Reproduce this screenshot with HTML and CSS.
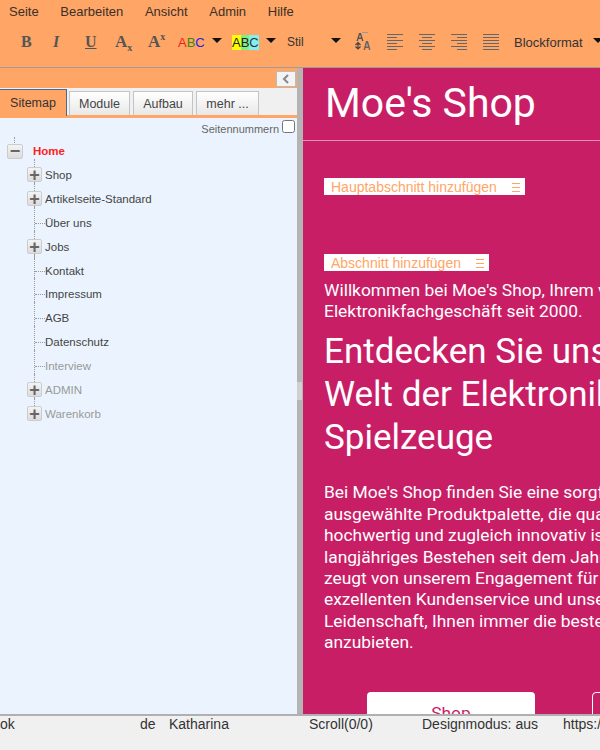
FILE: index.html

```html
<!DOCTYPE html>
<html lang="de">
<head>
    <meta charset="UTF-8" />
    <title>Moe's Shop</title>
    <link rel="stylesheet" href="styles.css">
</head>
<body>
    <header class="toolbar">
        <nav class="menu">
            <span>Seite</span>
            <span>Bearbeiten</span>
            <span>Ansicht</span>
            <span>Admin</span>
            <span>Hilfe</span>
        </nav>
        <div class="tools">
            <span class="tool bold">B</span>
            <span class="tool italic">I</span>
            <span class="tool under"><u>U</u></span>
            <span class="tool big w33">A<sub>x</sub></span>
            <span class="tool big w30">A<sup>x</sup></span>
            <span class="abc"><b class="red">A</b><b class="green">B</b><b class="blue">C</b></span>
            <i class="caret caret-a"></i>
            <span class="abc"><b class="yellow">A</b><b class="lime">B</b><b class="cyan">C</b></span>
            <i class="caret caret-b"></i>
            <span class="select-label stil">Stil</span>
            <i class="caret caret-c"></i>
            <svg class="tool-icon size-icon" width="18" height="20" viewBox="0 0 18 20">
                <path d="M5 1h2l2.500 8h-1.500l-.5-2h-3l-.5 2h-1.500zM5 5.500h2l-1-3z" fill="#555"/>
                <path d="M8 0.500h6" stroke="#999"/>
                <path d="M4 11v6M1.500 14.500l2.500 2.500 2.500-2.500M1.500 13l2.500-2.500 2.500 2.500" stroke="#444" fill="none" stroke-width="1.200"/>
                <path d="M12 9h2l2.500 9h-1.500l-.5-2h-3l-.5 2h-1.500zM12 14.500h2l-1-3.500z" fill="#666"/>
            </svg>
            <svg class="tool-icon align" width="16" height="18" viewBox="0 0 16 18">
                <path d="M0 1.500h16M0 4.500h10M0 7.500h16M0 10.500h10M0 13.500h16M0 16.500h10" stroke="#666"/>
            </svg>
            <svg class="tool-icon align" width="16" height="18" viewBox="0 0 16 18">
                <path d="M0 1.500h16M3 4.500h10M0 7.500h16M3 10.500h10M0 13.500h16M3 16.500h10" stroke="#666"/>
            </svg>
            <svg class="tool-icon align" width="16" height="18" viewBox="0 0 16 18">
                <path d="M0 1.500h16M6 4.500h10M0 7.500h16M6 10.500h10M0 13.500h16M6 16.500h10" stroke="#666"/>
            </svg>
            <svg class="tool-icon align last" width="16" height="18" viewBox="0 0 16 18">
                <path d="M0 1.500h16M0 4.500h16M0 7.500h16M0 10.500h16M0 13.500h16M0 16.500h16" stroke="#666"/>
            </svg>
            <span class="select-label block">Blockformat</span>
            <i class="caret"></i>
        </div>
    </header>

    <main class="main">
        <aside class="side">
            <div class="collapse-bar">
                <button class="collapse">
                    <svg width="10" height="10" viewBox="0 0 10 10"><path d="M7 1L3 5l4 4" fill="none" stroke="#888" stroke-width="2"/></svg>
                </button>
            </div>
            <div class="tabs">
                <span class="tab active">Sitemap</span>
                <span class="tab">Module</span>
                <span class="tab">Aufbau</span>
                <span class="tab">mehr ...</span>
            </div>
            <div class="tree-panel">
                <label class="numbers">Seitennummern <input type="checkbox"></label>
                <div class="tree">
                    <div class="root"><span class="toggle large">&minus;</span><span class="home">Home</span></div>
                    <ul class="nodes">
                        <li><span class="toggle">+</span>Shop</li>
                        <li><span class="toggle">+</span>Artikelseite-Standard</li>
                        <li class="leaf">Über uns</li>
                        <li><span class="toggle">+</span>Jobs</li>
                        <li class="leaf">Kontakt</li>
                        <li class="leaf">Impressum</li>
                        <li class="leaf">AGB</li>
                        <li class="leaf">Datenschutz</li>
                        <li class="leaf off">Interview</li>
                        <li class="off"><span class="toggle">+</span>ADMIN</li>
                        <li class="off"><span class="toggle">+</span>Warenkorb</li>
                    </ul>
                </div>
            </div>
        </aside>

        <div class="splitter"><span class="grip"></span></div>

        <section class="content">
            <div class="site-head">Moe's Shop</div>
            <div class="add main-add">Hauptabschnitt hinzufügen <svg class="bars" width="8" height="10" viewBox="0 0 8 10"><path d="M0 1.500h8M0 5.500h8M0 9.500h8" stroke="#ffa566"/></svg></div>
            <div class="add sub-add">Abschnitt hinzufügen <svg class="bars" width="8" height="10" viewBox="0 0 8 10"><path d="M0 1.500h8M0 5.500h8M0 9.500h8" stroke="#ffa566"/></svg></div>
            <p class="intro">Willkommen bei Moe's Shop, Ihrem vertrauenswürdigen<br>Elektronikfachgeschäft seit 2000.</p>
            <h1>Entdecken Sie unsere<br>Welt der Elektronik und<br>Spielzeuge</h1>
            <p class="text">Bei Moe's Shop finden Sie eine sorgfältig<br>ausgewählte Produktpalette, die qualitativ<br>hochwertig und zugleich innovativ ist. Unser<br>langjähriges Bestehen seit dem Jahr 2000<br>zeugt von unserem Engagement für<br>exzellenten Kundenservice und unsere<br>Leidenschaft, Ihnen immer die besten Produkte<br>anzubieten.</p>
            <div class="cta">
                <a class="btn">Shop</a>
                <a class="btn outline">Kontakt</a>
            </div>
        </section>
    </main>

    <footer class="status">
        <span class="st-ok">ok</span>
        <span class="st-lang">de</span>
        <span class="st-user">Katharina</span>
        <span class="st-scroll">Scroll(0/0)</span>
        <span class="st-mode">Designmodus: aus</span>
        <span class="st-url">https://moes-shop.de</span>
    </footer>
</body>
</html>
```

FILE: styles.css

```css
* {
    box-sizing: border-box;
}

html, body {
    height: 100%;
}

body {
    margin: 0;
    display: flex;
    flex-direction: column;
    overflow: hidden;
    font-family: "Liberation Sans", Arial, sans-serif;
    background: #f0f0f0;
    color: #222;
}

/* top bar */
.toolbar {
    height: 68px;
    flex: none;
    background: #ffa566;
    border-bottom: 1px solid #a89a8e;
    overflow: hidden;
}

.menu {
    display: flex;
    gap: 21.700px;
    padding: 4px 0 0 9px;
    height: 25px;
    font-size: 13px;
    line-height: 15px;
    color: #3a3028;
}

.tools {
    display: flex;
    align-items: center;
    height: 34px;
    padding-left: 21px;
    white-space: nowrap;
}

.tool {
    flex: none;
    color: #555;
    font-family: "Liberation Serif", serif;
    font-weight: bold;
    font-size: 16px;
    line-height: 20px;
}

.bold {
    width: 32px;
}

.italic {
    width: 32px;
    font-style: italic;
}

.under {
    width: 30px;
}

.big {
    font-size: 17px;
}

.w33 {
    width: 33px;
}

.w30 {
    width: 30px;
}

.big sub, .big sup {
    font-size: 10px;
    line-height: 0;
}

.abc {
    flex: none;
    width: 34px;
    font-size: 13px;
    line-height: 15px;
    display: flex;
}

.abc b {
    font-weight: normal;
}

.red { color: #f02020; }
.green { color: #3a8a10; }
.blue { color: #3020e0; }
.yellow { background: #ffff00; color: #222; }
.lime { background: #80f080; color: #222; }
.cyan { background: #80f0f0; color: #333; }

.caret {
    flex: none;
    width: 10px;
    height: 0;
    margin-bottom: 4px;
    border: 5px solid transparent;
    border-top: 5px solid #111;
    border-bottom: 0;
}

.caret-a {
    margin-right: 10px;
}

.caret-b {
    margin-right: 11px;
}

.caret-c {
    margin-right: 13px;
}

.select-label {
    flex: none;
    font-size: 12px;
    color: #333;
}

.stil {
    width: 44px;
}

.block {
    width: 79px;
    font-size: 13px;
}

.tool-icon {
    flex: none;
}

.size-icon {
    margin-right: 15px;
}

.align {
    margin-right: 16px;
}

.align.last {
    margin-right: 15px;
}

/* main area */
.main {
    flex: 1;
    display: flex;
    min-height: 0;
}

.side {
    width: 297px;
    flex: none;
    display: flex;
    flex-direction: column;
    background: #f0f0f0;
}

.collapse-bar {
    height: 20px;
    background: #ffa566;
    display: flex;
    justify-content: flex-end;
    align-items: flex-end;
    padding: 0 1px 1px 0;
}

.collapse {
    width: 20px;
    height: 16px;
    padding: 0;
    display: flex;
    align-items: center;
    justify-content: center;
    background: #f4f4f4;
    border: 1px solid #bbb;
}

.tabs {
    display: flex;
    height: 30px;
    gap: 3px;
    background: #f0f0f0;
    padding-top: 3px;
    border-bottom: 3px solid #ffa566;
    font-size: 12.500px;
}

.tab {
    display: flex;
    align-items: center;
    justify-content: center;
    height: 24px;
    color: #444;
    background: linear-gradient(#fff, #e8e8e8);
    border: 1px solid #c4c4c4;
    border-bottom: 0;
}

.tab.active {
    width: 67px;
    height: 27px;
    margin-top: -2px;
    margin-right: -1px;
    background: #ffa566;
    color: #333;
    border: 0;
    border-top: 1px solid #4a6a90;
    border-right: 1px solid #4a6a90;
}

.tab:nth-child(2) {
    width: 61px;
}

.tab:nth-child(3) {
    width: 60px;
}

.tab:nth-child(4) {
    width: 63px;
}

.tree-panel {
    flex: 1;
    background: #ebf4fe;
    overflow: hidden;
}

.numbers {
    display: flex;
    justify-content: flex-end;
    align-items: center;
    gap: 3px;
    height: 21px;
    font-size: 11px;
    color: #666;
    padding-right: 2px;
}

.numbers input {
    margin: 0 0 4px;
    width: 13px;
    height: 13px;
}

.tree {
    font-size: 11.500px;
    color: #444;
}

.root {
    position: relative;
    display: flex;
    align-items: center;
    height: 24px;
    padding-left: 7px;
}

.root::before {
    content: "";
    position: absolute;
    left: 14px;
    top: -2px;
    height: 6px;
    border-left: 1px dotted #999;
}

.home {
    color: #ff2020;
    font-weight: bold;
    font-size: 11.500px;
    margin-left: 7px;
}

.toggle {
    position: relative;
    flex: none;
    width: 15px;
    height: 15px;
    display: flex;
    align-items: center;
    justify-content: center;
    background: linear-gradient(#f4f4f4, #dcdcdc);
    border: 1px solid #ccc;
    border-radius: 2px;
    color: #666;
    font-size: 18px;
    font-weight: bold;
    line-height: 1;
    margin-right: 3px;
}

.toggle.large {
    width: 16px;
}

.nodes {
    list-style: none;
    margin: 0;
    padding: 0 0 0 27px;
}

.nodes li {
    position: relative;
    display: flex;
    align-items: center;
    height: 23.900px;
}

.nodes li::before {
    content: "";
    position: absolute;
    left: 7px;
    top: -4px;
    bottom: 0;
    border-left: 1px dotted #999;
}

.nodes li:last-child::before {
    bottom: 12px;
}

.nodes .leaf {
    padding-left: 18px;
}

.leaf::after {
    content: "";
    position: absolute;
    left: 8px;
    top: 12px;
    width: 10px;
    border-top: 1px dotted #999;
}

.nodes .off {
    color: #999;
}

.splitter {
    width: 6px;
    flex: none;
    background: #b4b4b4;
    display: flex;
    align-items: center;
}

.grip {
    width: 5px;
    height: 18px;
    background: #d0d0d0;
}

/* page preview */
.content {
    flex: 1;
    min-width: 0;
    background: #c81e66;
    color: #fff;
    font-family: Roboto, sans-serif;
    overflow: hidden;
    white-space: nowrap;
}

.site-head {
    height: 73px;
    padding: 11px 0 0 22px;
    font-size: 41px;
    line-height: 48px;
    border-bottom: 1px solid #e590b5;
}

.add {
    display: flex;
    justify-content: space-between;
    align-items: center;
    height: 17px;
    margin-left: 21px;
    padding: 0 5px 0 7px;
    background: #fff;
    color: #ffa566;
    font-family: "Liberation Sans", sans-serif;
    font-size: 14px;
}

.bars {
    flex: none;
}

.main-add {
    width: 201px;
    margin-top: 37px;
}

.sub-add {
    width: 165px;
    margin-top: 59px;
}

.intro {
    margin: 9px 0 0 21px;
    font-size: 17.400px;
    line-height: 21.400px;
}

h1 {
    margin: 7px 0 0 21px;
    font-size: 35px;
    font-weight: 400;
    line-height: 43px;
}

.text {
    margin: 23.500px 0 0 21px;
    font-size: 17.400px;
    line-height: 21.400px;
}

.cta {
    display: flex;
    gap: 57px;
    margin: 38.500px 0 0 64px;
}

.btn {
    display: block;
    flex: none;
    width: 168px;
    height: 48px;
    padding-top: 11px;
    background: #fff;
    color: #c81e66;
    border-radius: 4px;
    text-align: center;
    font-size: 17.400px;
}

.btn.outline {
    background: transparent;
    border: 1px solid #fff;
    color: #fff;
}

/* status line */
.status {
    height: 36px;
    flex: none;
    display: flex;
    border-top: 2px solid #b0b0b0;
    font-size: 14px;
    line-height: 16px;
    color: #333;
    white-space: nowrap;
    overflow: hidden;
}

.status span {
    flex: none;
}

.st-ok { width: 140px; }
.st-lang { width: 29px; }
.st-user { width: 140px; }
.st-scroll { width: 113px; }
.st-mode { width: 141px; }
```
